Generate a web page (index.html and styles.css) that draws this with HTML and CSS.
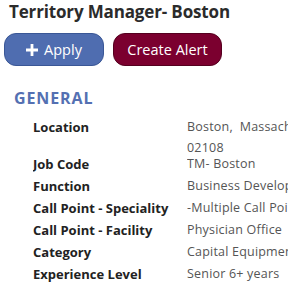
FILE: index.html
```html
<!DOCTYPE html>
<html>
<head>
<meta charset="utf-8">
<link rel="stylesheet" href="styles.css">
</head>
<body>
<div class="page">
  <h1 class="title">Territory Manager- Boston</h1>
  <div class="actions">
    <button class="btn btn-apply"><svg class="plus" viewBox="0 0 12 12" width="12" height="12"><path d="M4.6 0h2.8v4.6H12v2.8H7.4V12H4.6V7.4H0V4.6h4.6z" fill="#fff"/></svg>Apply</button>
    <button class="btn btn-alert">Create Alert</button>
  </div>
  <h2 class="section">GENERAL</h2>
  <div class="details">
    <div class="label">Location</div>
    <div class="value multi">Boston,&nbsp; Massachusetts<br>02108</div>
    <div class="label">Job Code</div>
    <div class="value">TM- Boston</div>
    <div class="label">Function</div>
    <div class="value">Business Development</div>
    <div class="label">Call Point - Speciality</div>
    <div class="value">-Multiple Call Points</div>
    <div class="label">Call Point - Facility</div>
    <div class="value">Physician Office</div>
    <div class="label">Category</div>
    <div class="value">Capital Equipment</div>
    <div class="label">Experience Level</div>
    <div class="value">Senior 6+ years</div>
  </div>
</div>
</body>
</html>
```
FILE: styles.css
```css
html, body {
  margin: 0;
  padding: 0;
  background: #fff;
  overflow: hidden;
}
.page {
  font-family: "Open Sans", "Liberation Sans", sans-serif;
  padding: 0 0 0 4px;
  width: 284px;
}
.title {
  margin: 0;
  padding: 0 0 0 5px;
  font-size: 17px;
  font-weight: 700;
  line-height: 24px;
  letter-spacing: -0.15px;
  color: #2b2b2b;
}
.actions {
  display: flex;
  gap: 9px;
  margin-top: 9px;
}
.btn {
  height: 33px;
  border-radius: 12px;
  font-family: inherit;
  font-size: 14.5px;
  color: #fff;
  display: flex;
  align-items: center;
  justify-content: center;
  padding: 0;
  cursor: pointer;
}
.btn-apply {
  width: 100px;
  background: #4f6db0;
  border: 1px solid #3a5796;
  gap: 6px;
}
.btn-alert {
  width: 109px;
  background: #7b002f;
  border: 1px solid #55001f;
}
.plus {
  display: block;
}
.section {
  margin: 22px 0 0 10px;
  font-size: 16px;
  font-weight: 700;
  line-height: 20px;
  letter-spacing: 0.9px;
  color: #5470b2;
}
.details {
  display: grid;
  grid-template-columns: 154px 1fr;
  margin: 8px 0 0 29px;
  white-space: nowrap;
  overflow: hidden;
}
.label {
  font-size: 13px;
  font-weight: 700;
  line-height: 22px;
  color: #222;
}
.value {
  font-size: 12.5px;
  letter-spacing: 0.2px;
  line-height: 22px;
  color: #555;
  overflow: hidden;
}
.value.multi {
  line-height: 21px;
  margin-bottom: -5px;
}
```
